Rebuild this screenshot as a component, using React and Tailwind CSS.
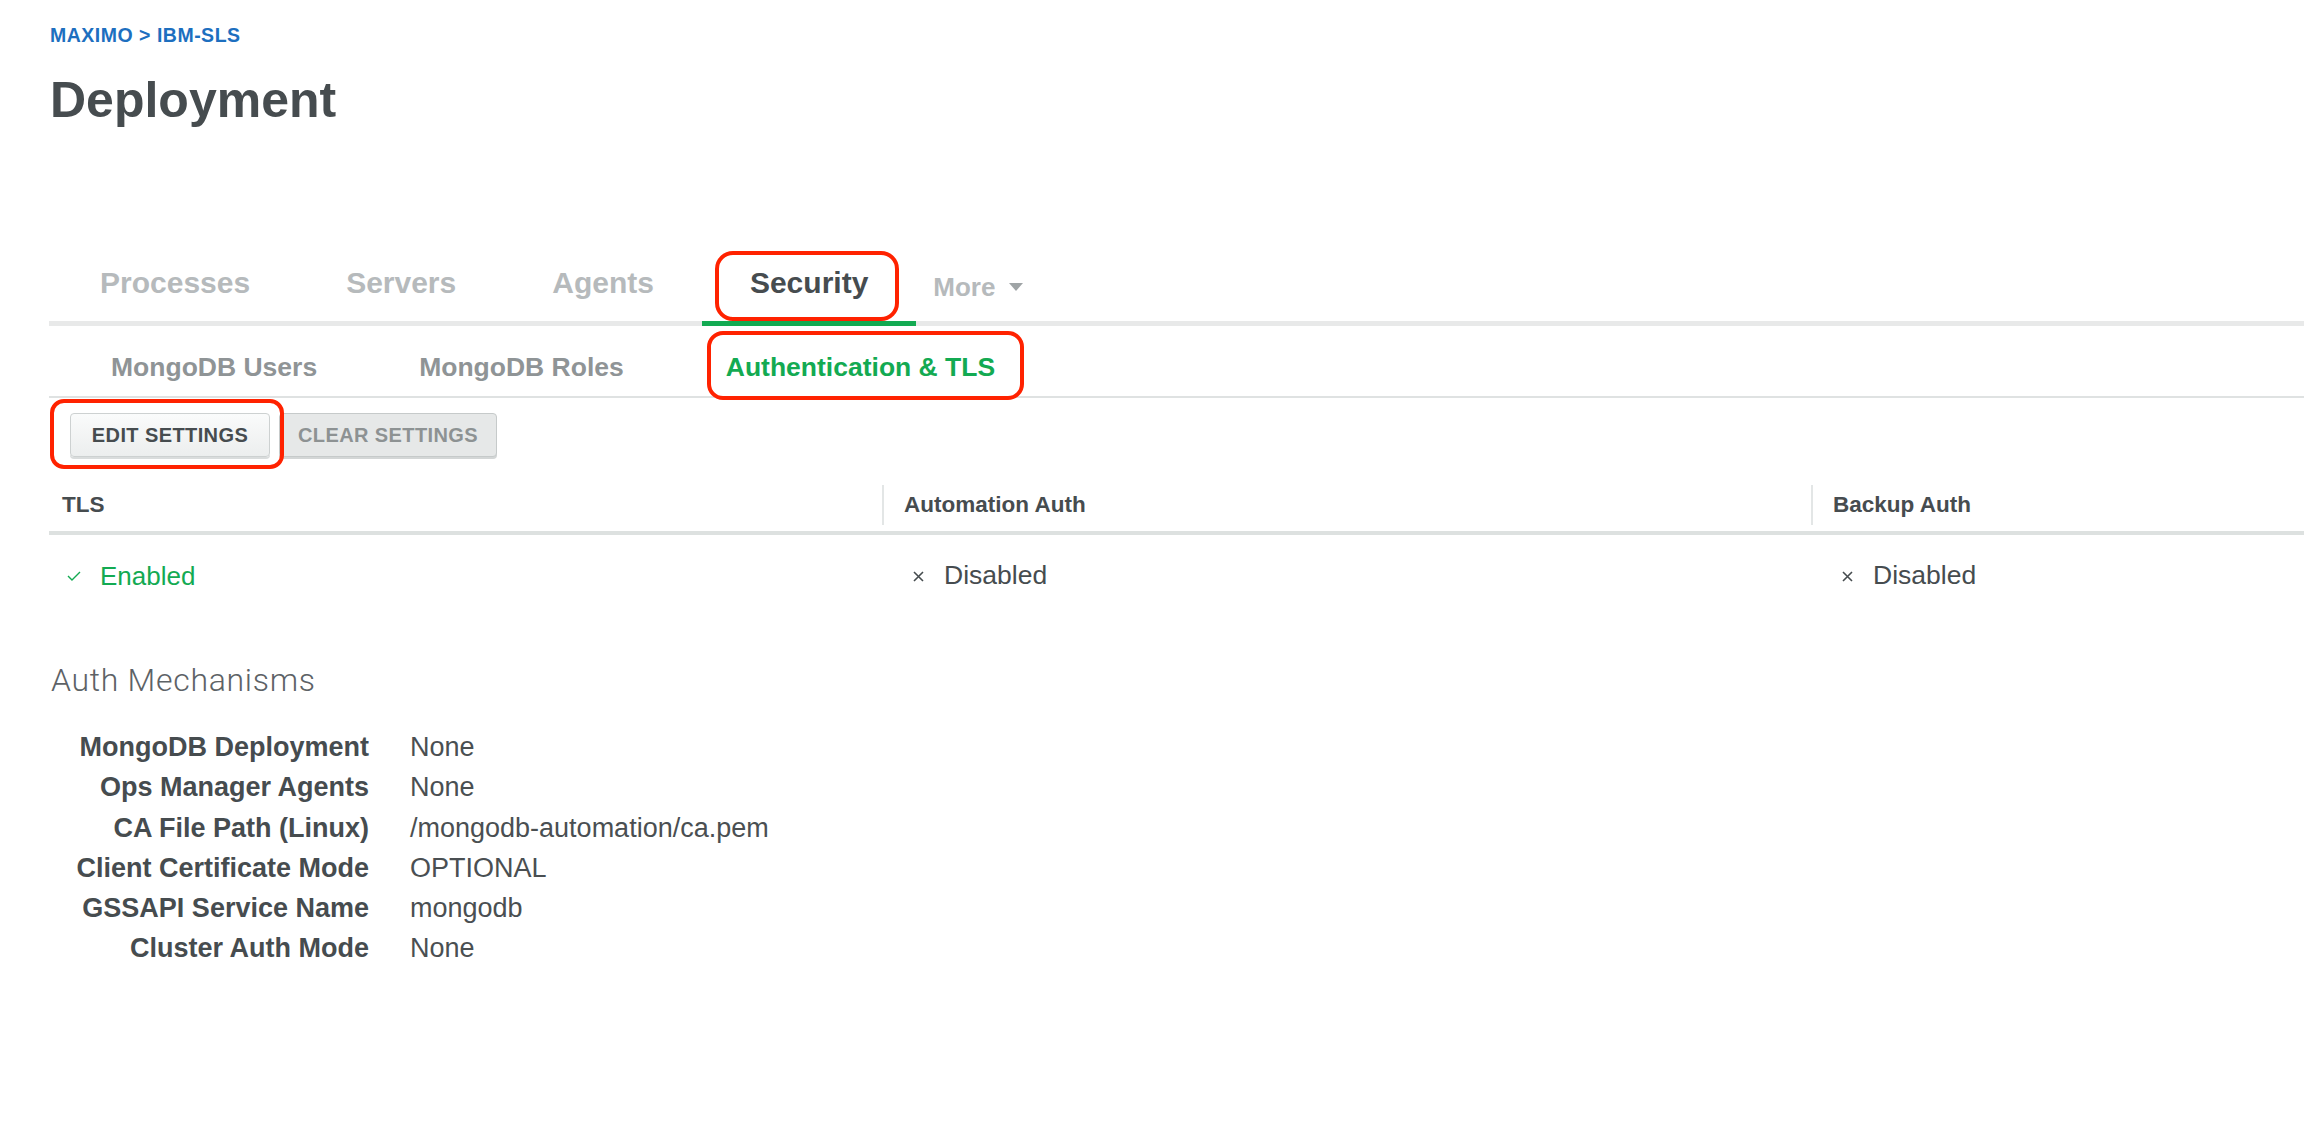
import React from 'react';

const tabs = ['Processes', 'Servers', 'Agents', 'Security'];
const subTabs = ['MongoDB Users', 'MongoDB Roles', 'Authentication & TLS'];

const mechanisms = [
    ['MongoDB Deployment', 'None'],
    ['Ops Manager Agents', 'None'],
    ['CA File Path (Linux)', '/mongodb-automation/ca.pem'],
    ['Client Certificate Mode', 'OPTIONAL'],
    ['GSSAPI Service Name', 'mongodb'],
    ['Cluster Auth Mode', 'None'],
];

const CheckIcon = () => (
    <svg width="14" height="10" viewBox="0 0 14 10" fill="none">
        <path d="M1 5l4 4 8-8" stroke="#13aa52" strokeWidth="1.4" />
    </svg>
);

const CrossIcon = () => (
    <svg width="11" height="11" viewBox="0 0 11 11" fill="none">
        <path d="M1 1l9 9M10 1l-9 9" stroke="#464c4f" strokeWidth="1.6" />
    </svg>
);

const Disabled = () => (
    <div className="flex items-center pl-[31px] text-[26.5px] text-[#464c4f]">
        <CrossIcon />
        <span className="ml-[20px]">Disabled</span>
    </div>
);

const App = () => {
    return (
        <div className="min-h-screen bg-white font-['Liberation_Sans',Arial,sans-serif] text-[#464c4f]">
            {/* Header */}
            <div className="pl-[50px] pt-[24px]">
                <div className="text-[19.5px] font-bold leading-[22px] tracking-[0.5px] text-[#1d6fbf]">MAXIMO &gt; IBM-SLS</div>
                <h1 className="mt-[26px] text-[50px] font-bold leading-[56px] text-[#464c4f]">Deployment</h1>
            </div>

            {/* Main tabs */}
            <div className="ml-[49px] mt-[137px] flex border-b-[5px] border-[#e8e9e9] pl-[3px]">
                {tabs.map((tab) => {
                    const active = tab === 'Security';
                    return (
                        <div
                            key={tab}
                            className={
                                active
                                    ? 'relative mb-[-5px] border-b-[5px] border-[#13aa52] px-[48px] pb-[16px] text-[30px] font-bold leading-[36px] text-[#464c4f]'
                                    : 'px-[48px] pb-[16px] text-[30px] font-bold leading-[36px] text-[#b6babc]'
                            }
                        >
                            {tab}
                            {active && (
                                <div className="absolute top-[-14px] bottom-[0px] left-[13px] right-[17px] rounded-[18px] border-[4px] border-[#ff2200]"></div>
                            )}
                        </div>
                    );
                })}
                <div className="flex items-center pl-[17px] pt-[4px] pb-[16px] text-[26px] font-bold leading-[36px] text-[#b6babc]">
                    More
                    <svg className="ml-[14px]" width="14" height="8" viewBox="0 0 14 8">
                        <path d="M0 0h14L7 8z" fill="#9fa4a6" />
                    </svg>
                </div>
            </div>

            {/* Sub tabs */}
            <div className="ml-[49px] flex border-b-2 border-[#dfe2e2] pl-[11px]">
                {subTabs.map((tab) => {
                    const active = tab === 'Authentication & TLS';
                    return (
                        <div
                            key={tab}
                            className={
                                active
                                    ? 'relative px-[51px] pt-[26px] pb-[14px] text-[26.5px] font-bold leading-[30px] text-[#13aa52]'
                                    : 'px-[51px] pt-[26px] pb-[14px] text-[26.5px] font-bold leading-[30px] text-[#8f9496]'
                            }
                        >
                            {tab}
                            {active && (
                                <div className="absolute top-[5px] bottom-[-4px] left-[32px] right-[22px] rounded-[16px] border-[4px] border-[#ff2200]"></div>
                            )}
                        </div>
                    );
                })}
            </div>

            {/* Buttons */}
            <div className="ml-[70px] mt-[15px] flex gap-[9px]">
                <div className="relative">
                    <button className="h-[44px] w-[200px] rounded-[4px] border border-[#cdd1d1] bg-gradient-to-b from-[#fafbfb] to-[#eceeee] text-[20px] font-bold tracking-[0.4px] text-[#464c4f] shadow-[0_2px_0_#d9dcdc]">
                        EDIT SETTINGS
                    </button>
                    <div className="absolute top-[-14px] bottom-[-12px] left-[-20px] right-[-14px] z-10 rounded-[14px] border-[4px] border-[#ff2200]"></div>
                </div>
                <button className="h-[44px] w-[218px] rounded-[4px] border border-[#c6caca] bg-[#e6e8e8] text-[20px] font-bold tracking-[0.4px] text-[#8d9293] shadow-[0_2px_0_#d3d6d6]">
                    CLEAR SETTINGS
                </button>
            </div>

            {/* Table */}
            <div className="ml-[49px] mt-[22px]">
                <div className="flex h-[56px] items-center border-b-[4px] border-[#dde1e0] text-[22.5px] font-bold">
                    <div className="w-[833px] pl-[13px]">TLS</div>
                    <div className="w-[929px]">
                        <div className="flex h-[40px] items-center border-l-2 border-[#e3e6e6] pl-[20px]">Automation Auth</div>
                    </div>
                    <div className="flex-1">
                        <div className="flex h-[40px] items-center border-l-2 border-[#e3e6e6] pl-[20px]">Backup Auth</div>
                    </div>
                </div>
                <div className="flex h-[76px] items-center pt-[6px]">
                    <div className="flex w-[833px] items-center pl-[18px] text-[26px] text-[#13aa52]">
                        <CheckIcon />
                        <span className="ml-[19px]">Enabled</span>
                    </div>
                    <div className="w-[929px]">
                        <Disabled />
                    </div>
                    <div className="flex-1">
                        <Disabled />
                    </div>
                </div>
            </div>

            {/* Auth mechanisms */}
            <div className="ml-[51px] mt-[50px]">
                <h2 className="font-['Roboto',Arial,sans-serif] text-[32px] font-light leading-[38px] tracking-[0.7px] text-[#5d6266]">Auth Mechanisms</h2>
                <div className="mt-[28px] grid grid-cols-[318px_1fr] gap-x-[41px] text-[27px] leading-[40.3px]">
                    {mechanisms.map(([label, value]) => (
                        <React.Fragment key={label}>
                            <div className="text-right font-bold text-[#464c4f]">{label}</div>
                            <div className="text-[#4a4f52]">{value}</div>
                        </React.Fragment>
                    ))}
                </div>
            </div>
        </div>
    );
};

export default App;
